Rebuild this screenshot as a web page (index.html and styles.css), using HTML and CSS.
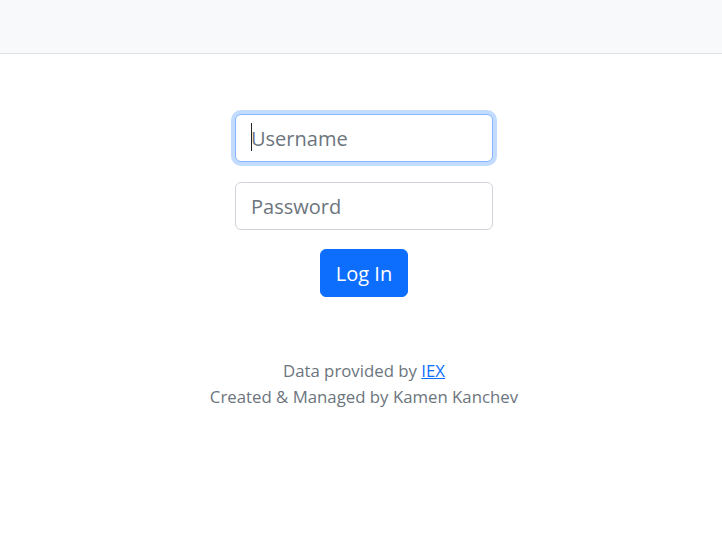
FILE: index.html
```html
<!DOCTYPE html>
<html lang="en">
<head>
<meta charset="utf-8">
<title>Log In</title>
<link rel="stylesheet" href="styles.css">
</head>
<body>
<nav class="navbar"></nav>
<div class="page">
<main class="main">
  <form class="login">
    <div class="field field-caret">
      <input class="input input-focus" type="text" name="username" placeholder="Username" autocomplete="off">
      <span class="caret"></span>
    </div>
    <div class="field field-last">
      <input class="input" type="password" name="password" placeholder="Password">
    </div>
    <button class="btn" type="submit">Log In</button>
  </form>
</main>
<footer class="footer">
  <p class="line">Data provided by <a href="#" class="link">IEX</a></p>
  <p class="line">Created &amp; Managed by Kamen Kanchev</p>
</footer>
</div>
</body>
</html>
```
FILE: styles.css
```css
* { box-sizing: border-box; }
html, body { margin: 0; padding: 0; }
body {
  font-family: "Open Sans", "Noto Sans", sans-serif;
  color: #212529;
  background: #fff;
}
.navbar {
  height: 54px;
  background: #f8f9fa;
  border-bottom: 1px solid #dee2e6;
}
.page { padding-left: 6px; }
.main {
  padding-top: 60px;
  display: flex;
  justify-content: center;
}
.login {
  display: flex;
  flex-direction: column;
  align-items: center;
}
.field { margin-bottom: 20px; }
.field-last { margin-bottom: 19px; }
.field-caret { position: relative; }
.caret {
  position: absolute;
  left: 16px;
  top: 9px;
  width: 1px;
  height: 28px;
  background: #212529;
}
.input {
  display: block;
  width: 258px;
  height: 48px;
  padding: 8px 15px;
  font-family: inherit;
  font-size: 20px;
  color: #212529;
  background: #fff;
  border: 1px solid #ced4da;
  border-radius: 6px;
  outline: none;
}
.input::placeholder { color: #6c757d; opacity: 1; }
.input-focus, .input:focus {
  border-color: #86b7fe;
  box-shadow: 0 0 0 4px rgba(13, 110, 253, 0.25);
}
.btn {
  width: 88px;
  height: 48px;
  font-family: inherit;
  font-size: 20px;
  color: #fff;
  background: #0d6efd;
  border: 1px solid #0d6efd;
  border-radius: 6px;
  padding: 0;
  cursor: pointer;
}
.footer {
  margin-top: 61px;
  text-align: center;
  color: #6c757d;
  font-size: 16.8px;
}
.line { margin: 0; line-height: 26px; }
.link { color: #0d6efd; text-decoration: underline; }
```
